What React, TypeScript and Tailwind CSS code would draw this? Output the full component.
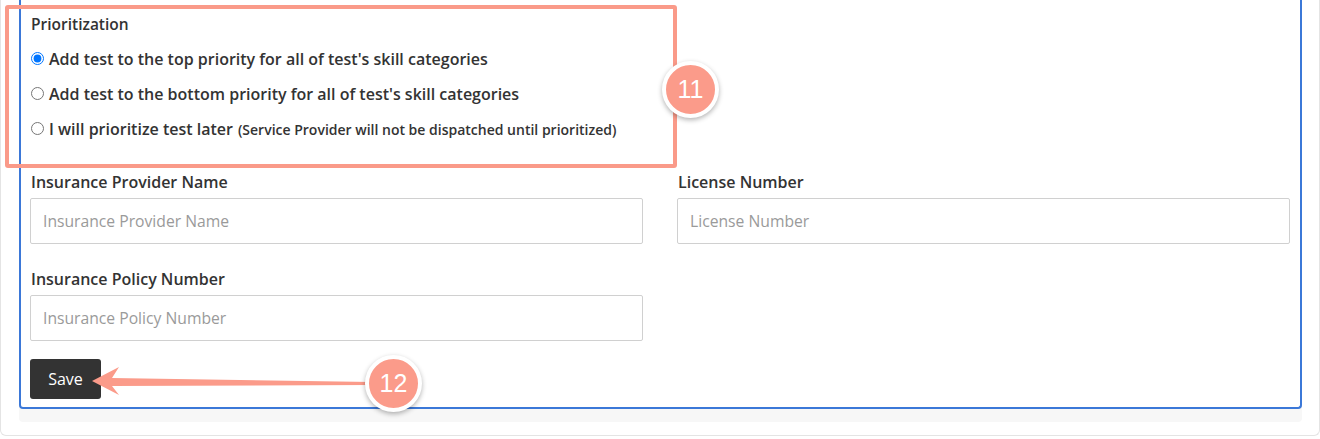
import { useState } from "react";

const options = [
  { id: "top", label: "Add test to the top priority for all of test's skill categories" },
  { id: "bottom", label: "Add test to the bottom priority for all of test's skill categories" },
  {
    id: "later",
    label: "I will prioritize test later",
    note: "(Service Provider will not be dispatched until prioritized)",
  },
];

function Field({ label }: { label: string }) {
  return (
    <div className="flex flex-col">
      <label className="pl-px text-[16px] leading-[22px] font-semibold text-[#333]">{label}</label>
      <input
        placeholder={label}
        className="mt-[5px] h-[46px] w-full rounded-[2px] border border-[#d0d0d0] bg-white px-[12px] text-[15.7px] text-[#333] placeholder:text-[#9a9a9a] outline-none"
      />
    </div>
  );
}

function Badge({ n, className }: { n: string; className: string }) {
  return (
    <div
      className={`absolute flex h-[57px] w-[57px] items-center justify-center rounded-full border-[4px] border-white bg-[#fb9b8a] shadow-[0_2px_5px_rgba(0,0,0,0.3)] ${className}`}
    >
      <span className="font-['Liberation_Sans',Arial,sans-serif] text-[25px] leading-none text-white">{n}</span>
    </div>
  );
}

export default function App() {
  const [priority, setPriority] = useState("top");

  return (
    <div className="relative h-[439px] w-[1320px] overflow-hidden bg-white font-['Open_Sans',sans-serif]">
      {/* outer card */}
      <div className="rounded-b-md border-x border-b border-[#e4e4e4] pl-[18px] pr-[17px] pb-[13px]">
        <div className="rounded-b bg-[#f7f7f7] pb-[13px]">
          <div className="rounded-b-[4px] border-x-2 border-b-2 border-[#3b78d8] bg-white pt-[13px] pb-[8px] pl-[9px] pr-[10px]">
            {/* Prioritization */}
            <div className="pl-px text-[15.5px] leading-[22px] font-semibold text-[#333]">Prioritization</div>
            <div className="mt-[6px] flex flex-col">
              {options.map((o) => (
                <label key={o.id} className="flex h-[35px] items-center gap-[5px] pl-px">
                  <input
                    type="radio"
                    name="priority"
                    checked={priority === o.id}
                    onChange={() => setPriority(o.id)}
                    className="m-0 h-[13px] w-[13px]"
                  />
                  <span className="text-[16px] font-semibold text-[#333]">
                    {o.label}
                    {o.note && <span className="ml-[5px] text-[14px]">{o.note}</span>}
                  </span>
                </label>
              ))}
            </div>

            {/* insurance fields */}
            <div className="mt-[25px] grid grid-cols-2 gap-x-[34px] gap-y-[24px]">
              <Field label="Insurance Provider Name" />
              <Field label="License Number" />
              <Field label="Insurance Policy Number" />
            </div>

            <button className="mt-[18px] flex h-[40px] w-[71px] items-center justify-center rounded-[3px] bg-[#333] text-[16px] text-white">
              Save
            </button>
          </div>
        </div>
      </div>

      {/* annotations */}
      <div className="absolute left-[5px] top-[5px] h-[163px] w-[672px] rounded-[3px] border-[4px] border-[#fa9a89]" />
      <Badge n="11" className="left-[662px] top-[61px]" />

      <svg className="absolute left-[88px] top-[362px]" width="290" height="40" viewBox="88 362 290 40">
        <polygon points="92,381 119,367 112,378 372,382 372,385 112,386 119,395" fill="#fb9b8a" />
      </svg>
      <Badge n="12" className="left-[365px] top-[355px]" />
    </div>
  );
}
